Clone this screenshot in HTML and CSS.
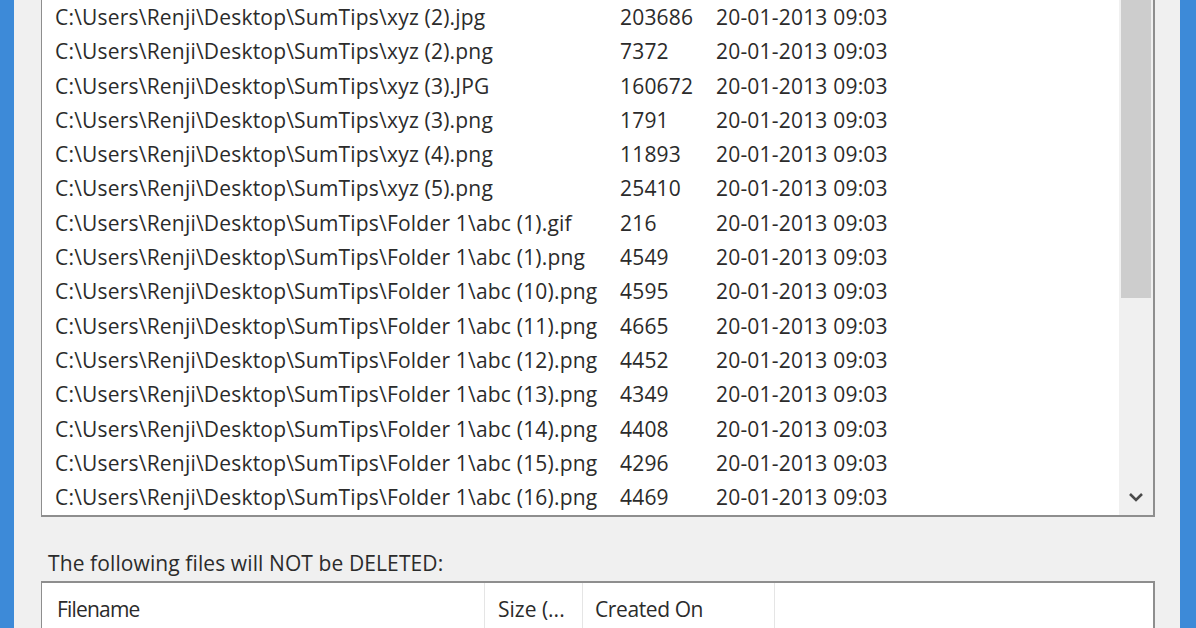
FILE: index.html
```html
<!DOCTYPE html>
<html>
<head>
<meta charset="utf-8">
<link rel="stylesheet" href="styles.css">
</head>
<body>
<div class="window">
  <div class="content">
    <div class="listbox top-list">
      <div class="rows">
        <div class="row"><span class="c-name">C:\Users\Renji\Desktop\SumTips\xyz (2).jpg</span><span class="c-size">203686</span><span class="c-date">20-01-2013 09:03</span></div>
        <div class="row"><span class="c-name">C:\Users\Renji\Desktop\SumTips\xyz (2).png</span><span class="c-size">7372</span><span class="c-date">20-01-2013 09:03</span></div>
        <div class="row"><span class="c-name">C:\Users\Renji\Desktop\SumTips\xyz (3).JPG</span><span class="c-size">160672</span><span class="c-date">20-01-2013 09:03</span></div>
        <div class="row"><span class="c-name">C:\Users\Renji\Desktop\SumTips\xyz (3).png</span><span class="c-size">1791</span><span class="c-date">20-01-2013 09:03</span></div>
        <div class="row"><span class="c-name">C:\Users\Renji\Desktop\SumTips\xyz (4).png</span><span class="c-size">11893</span><span class="c-date">20-01-2013 09:03</span></div>
        <div class="row"><span class="c-name">C:\Users\Renji\Desktop\SumTips\xyz (5).png</span><span class="c-size">25410</span><span class="c-date">20-01-2013 09:03</span></div>
        <div class="row"><span class="c-name">C:\Users\Renji\Desktop\SumTips\Folder 1\abc (1).gif</span><span class="c-size">216</span><span class="c-date">20-01-2013 09:03</span></div>
        <div class="row"><span class="c-name">C:\Users\Renji\Desktop\SumTips\Folder 1\abc (1).png</span><span class="c-size">4549</span><span class="c-date">20-01-2013 09:03</span></div>
        <div class="row"><span class="c-name">C:\Users\Renji\Desktop\SumTips\Folder 1\abc (10).png</span><span class="c-size">4595</span><span class="c-date">20-01-2013 09:03</span></div>
        <div class="row"><span class="c-name">C:\Users\Renji\Desktop\SumTips\Folder 1\abc (11).png</span><span class="c-size">4665</span><span class="c-date">20-01-2013 09:03</span></div>
        <div class="row"><span class="c-name">C:\Users\Renji\Desktop\SumTips\Folder 1\abc (12).png</span><span class="c-size">4452</span><span class="c-date">20-01-2013 09:03</span></div>
        <div class="row"><span class="c-name">C:\Users\Renji\Desktop\SumTips\Folder 1\abc (13).png</span><span class="c-size">4349</span><span class="c-date">20-01-2013 09:03</span></div>
        <div class="row"><span class="c-name">C:\Users\Renji\Desktop\SumTips\Folder 1\abc (14).png</span><span class="c-size">4408</span><span class="c-date">20-01-2013 09:03</span></div>
        <div class="row"><span class="c-name">C:\Users\Renji\Desktop\SumTips\Folder 1\abc (15).png</span><span class="c-size">4296</span><span class="c-date">20-01-2013 09:03</span></div>
        <div class="row"><span class="c-name">C:\Users\Renji\Desktop\SumTips\Folder 1\abc (16).png</span><span class="c-size">4469</span><span class="c-date">20-01-2013 09:03</span></div>
      </div>
      <div class="scrollbar">
        <div class="thumb"></div>
        <div class="arrow">
          <svg width="16" height="10" viewBox="0 0 16 10"><path d="M2 2 L8 8 L14 2" fill="none" stroke="#4a4a4a" stroke-width="2.6"/></svg>
        </div>
      </div>
    </div>
    <div class="label">The following files will NOT be DELETED:</div>
    <div class="listbox bottom-list">
      <div class="header">
        <div class="h-cell h-name">Filename</div>
        <div class="h-cell h-size">Size (...</div>
        <div class="h-cell h-date">Created On</div>
        <div class="h-cell h-rest"></div>
      </div>
    </div>
  </div>
</div>
</body>
</html>
```

FILE: styles.css
```css
html, body {
  margin: 0;
  padding: 0;
  width: 1196px;
  height: 628px;
  overflow: hidden;
}
body {
  font-family: "Open Sans", "Noto Sans", "DejaVu Sans", sans-serif;
  color: #2b2b2b;
}
.window {
  box-sizing: border-box;
  height: 628px;
  border-left: 14px solid #3d8ad8;
  border-right: 16px solid #3d8ad8;
  background: #f0f0f0;
  padding: 0 25px 0 27px;
}
.content {
  display: flex;
  flex-direction: column;
  height: 100%;
}
.listbox {
  background: #fff;
  border: 1px solid #8e8e8e;
  border-right-width: 2px;
}
.top-list {
  flex-shrink: 0;
  border-top: none;
  border-bottom-width: 2px;
  height: 515px;
  display: flex;
}
.rows {
  flex: 1;
  padding-left: 13px;
}
.row {
  display: grid;
  grid-template-columns: 565px 96px 1fr;
  height: 34.3px;
  line-height: 34.3px;
  font-size: 21px;
  letter-spacing: 0.2px;
  white-space: nowrap;
}
.scrollbar {
  width: 34px;
  background: #f0f0f0;
  display: flex;
  flex-direction: column;
  justify-content: space-between;
  align-items: center;
}
.thumb {
  width: 30px;
  height: 298px;
  background: #cdcdcd;
}
.arrow {
  height: 36px;
  display: flex;
  align-items: center;
  justify-content: center;
}
.label {
  flex-shrink: 0;
  height: 64px;
  box-sizing: border-box;
  padding: 32px 0 0 7px;
  line-height: 28px;
  font-size: 21px;
  letter-spacing: 0.1px;
  white-space: nowrap;
}
.bottom-list {
  flex: 1;
  min-height: 0;
  border-top-width: 2px;
  border-bottom: none;
}
.header {
  display: flex;
  height: 52px;
  font-size: 21px;
  letter-spacing: -0.4px;
}
.h-cell {
  display: flex;
  align-items: center;
  box-sizing: border-box;
  border-right: 1px solid #e5e5e5;
  white-space: nowrap;
}
.h-name { width: 443px; padding-left: 15px; letter-spacing: -0.8px; }
.h-size { width: 98px; padding-left: 13px; letter-spacing: 0; }
.h-date { width: 192px; padding-left: 12px; }
.h-rest { flex: 1; border-right: none; }
```
